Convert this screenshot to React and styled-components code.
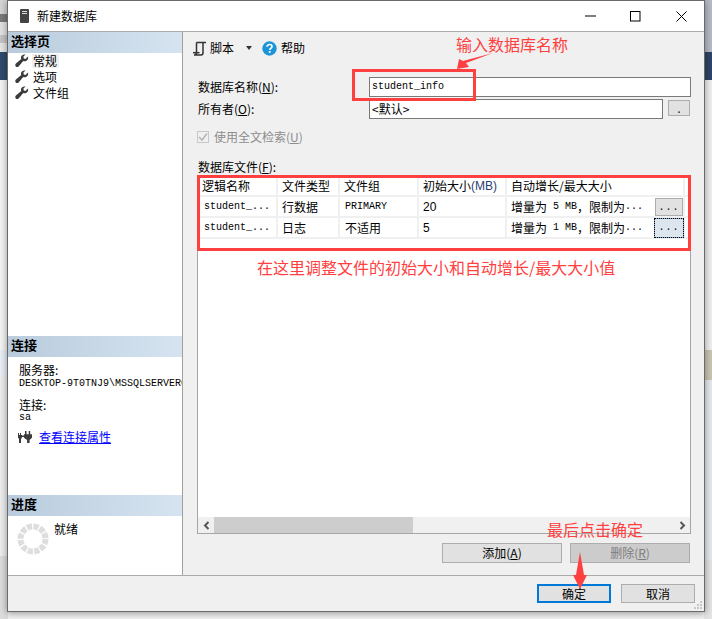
import React from "react";
import styled, { createGlobalStyle } from "styled-components";

const CJK = `"Noto Sans CJK SC", "Liberation Sans", sans-serif`;
const RED = "#ff4040";

const Global = createGlobalStyle`
  html, body { margin: 0; padding: 0; background: #f0f0f0; }
  * { box-sizing: border-box; }
`;

const Desktop = styled.div`
  position: relative;
  width: 712px;
  height: 619px;
  overflow: hidden;
  font-family: ${CJK};
  font-size: 12px;
  line-height: 14px;
  color: #000;
  display: flex;
  justify-content: space-between;
`;
const Strip = styled.div`
  width: 8px;
  display: flex;
  flex-direction: column;
`;
const Band = styled.div`
  height: ${(p) => p.$h}px;
  flex: ${(p) => (p.$h ? "none" : 1)};
  background: ${(p) => p.$c};
`;

const Window = styled.div`
  position: absolute;
  left: 7px;
  top: 0;
  width: 698px;
  height: 612px;
  border: 1px solid #6a6a6a;
  background: #f0f0f0;
  box-shadow: 0 1px 7px rgba(0, 0, 0, 0.4);
  display: flex;
  flex-direction: column;
`;
const TitleBar = styled.div`
  height: 31px;
  flex: none;
  background: #fff;
  border-bottom: 1px solid #ababab;
  display: flex;
  align-items: center;
  padding-left: 12px;
`;
const TitleText = styled.span`
  margin-left: 8px;
  flex: 1;
  margin-top: -1px;
`;
const WinBtn = styled.span`
  width: 45px;
  height: 30px;
  display: flex;
  align-items: center;
  justify-content: center;
  margin-right: ${(p) => p.$mr || 0}px;
`;
const Body = styled.div`
  flex: 1;
  display: flex;
  min-height: 0;
`;
const Sidebar = styled.aside`
  width: 175px;
  flex: none;
  background: #fff;
  border-right: 1px solid #a0a0a0;
  display: flex;
  flex-direction: column;
`;
const SectionHead = styled.div`
  height: 21px;
  flex: none;
  padding: 0 0 3px 3px;
  display: flex;
  align-items: center;
  font-size: 13px;
  font-weight: 700;
  background: linear-gradient(90deg, #b9cbdc 0%, #d6e4f1 100%);
`;
const Nav = styled.nav`
  height: 283px;
  flex: none;
  padding: 0 0 0 7px;
`;
const NavRow = styled.div`
  height: 16px;
  display: flex;
  align-items: center;
  gap: 3px;
`;
const NavLabel = styled.span`
  padding: 0 2px 0 1px;
  background: ${(p) => (p.$active ? "#f0f0f0" : "transparent")};
`;
const ConnBody = styled.div`
  height: 138px;
  flex: none;
  padding: 7px 0 0 11px;
  overflow: hidden;
`;
const ConnLine = styled.div`
  height: ${(p) => p.$h || 12}px;
  margin-top: ${(p) => p.$mt || 0}px;
  line-height: ${(p) => p.$h || 12}px;
  white-space: nowrap;
`;
const LinkRow = styled.div`
  display: flex;
  align-items: center;
  gap: 6px;
  margin-top: 8px;
  height: 16px;
  margin-left: -1px;
`;
const Link = styled.a`
  color: #0000ff;
  text-decoration: underline;
`;
const ProgressBody = styled.div`
  flex: 1;
  display: flex;
  padding: 7px 0 0 9px;
  gap: 5px;
`;
const Ready = styled.span`
  line-height: 12px;
`;

const Lat = styled.span`
  font-family: "Liberation Mono", monospace;
  font-size: 10px;
`;

const Main = styled.main`
  flex: 1;
  min-width: 0;
  display: flex;
  flex-direction: column;
  padding: 6px 13px 12px 14px;
`;
const Toolbar = styled.div`
  height: 20px;
  flex: none;
  margin-left: -5px;
  display: flex;
  align-items: center;
`;
const ToolLabel = styled.span`
  margin-left: ${(p) => p.$ml || 0}px;
`;
const Caret = styled.span`
  width: 0;
  height: 0;
  margin: 0 10px 0 12px;
  border-left: 3.5px solid transparent;
  border-right: 3.5px solid transparent;
  border-top: 4px solid #333;
`;
const Form = styled.div`
  margin-top: 19px;
  padding-left: 1px;
  display: grid;
  grid-template-columns: 171px 1fr;
  row-gap: 2px;
  align-items: center;
`;
const Input = styled.div`
  height: 20px;
  background: #fff;
  border: 1px solid #7a7a7a;
  padding-left: 2px;
  display: flex;
  align-items: center;
  flex: 1;
`;
const OwnerRow = styled.div`
  display: flex;
  gap: 5px;
  align-items: flex-start;
`;
const DotBtn = styled.div`
  width: 22px;
  height: 16px;
  margin: 1px 1px 0 0;
  background: #e1e1e1;
  border: 1px solid #adadad;
  display: flex;
  justify-content: center;
  font-size: 10px;
  line-height: 20px;
  overflow: hidden;
  font-family: "Liberation Mono", monospace;
`;
const CheckRow = styled.div`
  margin-top: 9px;
  height: 18px;
  display: flex;
  align-items: center;
  gap: 5px;
  color: #8c8c8c;
  flex: none;
`;
const CheckBox = styled.span`
  width: 12px;
  height: 12px;
  border: 1px solid #c8c8c8;
  background: #f0f0f0;
  display: flex;
`;
const FilesLabel = styled.div`
  margin-top: 14px;
  margin-left: 1px;
  height: 14px;
  flex: none;
`;
const GridBox = styled.div`
  margin-top: 2px;
  flex: 1;
  min-height: 0;
  background: #fff;
  border: 1px solid #a6a6a6;
  border-top: none;
  display: flex;
  flex-direction: column;
`;
const Rows = styled.div`
  flex: 1;
`;
const Row = styled.div`
  display: grid;
  grid-template-columns: 80px 62px 79px 88px 178px 1fr;
  height: ${(p) => p.$h}px;
  border-bottom: 2px solid #f0f0f0;
`;
const Cell = styled.div`
  border-right: 2px solid #f0f0f0;
  padding-left: ${(p) => p.$pl || 5}px;
  display: flex;
  align-items: center;
  white-space: nowrap;
  font-family: ${(p) => (p.$sans ? `"Liberation Sans", sans-serif` : CJK)};
`;
const SansMB = styled.span`
  font-family: "Liberation Sans", sans-serif;
  color: #2a3f6f;
  font-size: 12px;
`;
const GrowCell = styled(Cell)`
  position: relative;
  overflow: visible;
`;
const RowBtn = styled.div`
  position: absolute;
  right: ${(p) => (p.$focus ? -1 : 0)}px;
  top: ${(p) => (p.$focus ? 0 : 1)}px;
  width: ${(p) => (p.$focus ? 30 : 28)}px;
  height: ${(p) => (p.$focus ? 20 : 18)}px;
  background: ${(p) => (p.$focus ? "#dde6ee" : "#e1e1e1")};
  border: 1px solid ${(p) => (p.$focus ? "#7fa6c9" : "#adadad")};
  outline: ${(p) => (p.$focus ? "1px dotted #000" : "none")};
  outline-offset: -1px;
  text-align: center;
  font-family: "Liberation Mono", monospace;
  font-size: 10px;
  letter-spacing: 1px;
  line-height: 17px;
`;
const Scrollbar = styled.div`
  height: 16px;
  flex: none;
  background: #f0f0f0;
  display: flex;
  align-items: center;
`;
const ScrollArrow = styled.span`
  width: 16px;
  height: 16px;
  flex: none;
  display: flex;
  align-items: center;
  justify-content: center;
`;
const ScrollTrack = styled.div`
  flex: 1;
  height: 16px;
`;
const Thumb = styled.div`
  width: 199px;
  height: 16px;
  background: #cdcdcd;
`;
const GridActions = styled.div`
  margin-top: 9px;
  height: 20px;
  flex: none;
  display: flex;
  justify-content: flex-end;
  gap: 8px;
  padding-right: 1px;
`;
const Btn = styled.div`
  width: ${(p) => p.$w}px;
  height: ${(p) => p.$h || 20}px;
  background: ${(p) => (p.$disabled ? "#cccccc" : "#e1e1e1")};
  color: ${(p) => (p.$disabled ? "#7d7d7d" : "#000")};
  border: ${(p) => (p.$primary ? "2px solid #0078d7" : "1px solid #adadad")};
  display: flex;
  align-items: center;
  justify-content: center;
`;
const Footer = styled.footer`
  height: 36px;
  flex: none;
  border-top: 1px solid #ababab;
  display: flex;
  justify-content: flex-end;
  align-items: flex-start;
  padding: 8px 9px 0 0;
  gap: 10px;
  position: relative;
`;
const Grip = styled.svg`
  position: absolute;
  right: 1px;
  bottom: 1px;
`;

const Note = styled.div`
  position: absolute;
  left: ${(p) => p.$x}px;
  top: ${(p) => p.$y}px;
  color: ${RED};
  font-size: 16px;
  line-height: 20px;
  white-space: nowrap;
`;
const RedBox = styled.div`
  position: absolute;
  left: ${(p) => p.$x}px;
  top: ${(p) => p.$y}px;
  width: ${(p) => p.$w}px;
  height: ${(p) => p.$h}px;
  border: 3px solid ${RED};
`;
const Arrow = styled.svg`
  position: absolute;
  left: 0;
  top: 0;
  pointer-events: none;
`;

const Wrench = () => (
  <svg width="14" height="14" viewBox="0 0 14 14" style={{ flex: "none" }}>
    <path d="M13 2.6 10.4 5 8.8 4.4 8.4 2.6 10.6.6C8.6-.1 6.4 1 6 3c-.1.7 0 1.4.2 1.9L.9 9.6c-.9.9-.8 2.1-.1 2.9.8.8 2 .8 2.8-.1l4.7-5.3c.7.3 1.4.3 2.1.2 2-.5 3.2-2.6 2.6-4.7Z" fill="#3c3c3c" />
  </svg>
);
const ScriptIcon = () => (
  <svg width="15" height="15" viewBox="0 0 15 15" style={{ flex: "none" }}>
    <path d="M4.5 1.5h9.5M4.5 1.5v10.5M4.5 12c0 1.5-1 2-2.5 2h7c1.5 0 2-1 2-2.5V1.8" fill="none" stroke="#333" strokeWidth="1.5" />
    <path d="M1 11.7h6.5" stroke="#333" strokeWidth="1.5" />
  </svg>
);
const HelpIcon = () => (
  <svg width="15" height="15" viewBox="0 0 15 15" style={{ flex: "none" }}>
    <circle cx="7.5" cy="7.5" r="7.2" fill="#1b95d8" />
    <path d="M5.1 5.7c0-1.4 1.1-2.2 2.5-2.2s2.4.8 2.4 2c0 1.9-2.3 1.8-2.3 3.5" fill="none" stroke="#fff" strokeWidth="1.7" />
    <rect x="6.8" y="10" width="1.8" height="1.8" fill="#fff" />
  </svg>
);
const ServerIcon = () => (
  <svg width="9" height="14" viewBox="0 0 9 14" style={{ flex: "none" }}>
    <rect width="9" height="14" rx="1" fill="#444" />
    <rect x="2" y="2" width="5" height="1" fill="#ddd" />
    <rect x="2" y="4" width="5" height="1" fill="#ddd" />
  </svg>
);
const PlugIcon = () => (
  <svg width="15" height="12" viewBox="0 0 15 12" style={{ flex: "none" }}>
    <path d="M0 2h1v2h1V2h1v2h1v2.5L3 8v4H1V8L0 6.5Z" fill="#3c3c3c" />
    <path d="M7 0h1.5v3.2h2.2V0h1.5v3.2H14v3.5L11.6 9v3H9.1V9L6 6.7V3.2h1Z" fill="#3c3c3c" />
    <path d="M4 4.6h2v1.4H4z" fill="#3c3c3c" />
  </svg>
);
const Spinner = () => (
  <svg width="32" height="32" viewBox="0 0 32 32" style={{ flex: "none" }}>
    <circle cx="16" cy="16" r="12.5" fill="none" stroke="#dedede" strokeWidth="6" strokeDasharray="5.2 1.35" />
  </svg>
);

export default function App() {
  const left = [
    [14, "#d4d4d4"], [8, "#7a7a7a"], [13, "#e2e2e2"], [8, "#c4c4c4"], [9, "#e6e6e6"],
    [28, "#2f4a6e"], [270, "#f4f4f4"], [26, "#e8eef6"], [180, "#ececec"], [0, "#dcdcdc"],
  ];
  const right = [
    [52, "#b6bbc7"], [28, "#2c4466"], [270, "#eeeeee"], [30, "#c8c5b3"], [180, "#e6e8ef"], [0, "#e4e4e4"],
  ];
  return (
    <Desktop>
      <Global />
      <Strip>{left.map(([h, c], i) => <Band key={i} $h={h} $c={c} />)}</Strip>
      <Strip>{right.map(([h, c], i) => <Band key={i} $h={h} $c={c} />)}</Strip>

      <Window>
        <TitleBar>
          <ServerIcon />
          <TitleText>新建数据库</TitleText>
          <WinBtn>
            <svg width="11" height="2"><rect width="11" height="1" y="0.5" fill="#000" /></svg>
          </WinBtn>
          <WinBtn $mr={1}>
            <svg width="11" height="11"><rect x="0.5" y="0.5" width="9.5" height="9.5" fill="none" stroke="#000" /></svg>
          </WinBtn>
          <WinBtn>
            <svg width="11" height="11"><path d="M.5.5l10 10M10.5.5l-10 10" stroke="#000" fill="none" /></svg>
          </WinBtn>
        </TitleBar>
        <Body>
          <Sidebar>
            <SectionHead>选择页</SectionHead>
            <Nav>
              <NavRow><Wrench /><NavLabel $active>常规</NavLabel></NavRow>
              <NavRow><Wrench /><NavLabel>选项</NavLabel></NavRow>
              <NavRow><Wrench /><NavLabel>文件组</NavLabel></NavRow>
            </Nav>
            <SectionHead>连接</SectionHead>
            <ConnBody>
              <ConnLine $h={11}>服务器:</ConnLine>
              <ConnLine><Lat>DESKTOP-9T0TNJ9\MSSQLSERVER01</Lat></ConnLine>
              <ConnLine $mt={12}>连接:</ConnLine>
              <ConnLine $mt={-2}><Lat>sa</Lat></ConnLine>
              <LinkRow><PlugIcon /><Link>查看连接属性</Link></LinkRow>
            </ConnBody>
            <SectionHead>进度</SectionHead>
            <ProgressBody>
              <Spinner />
              <Ready>就绪</Ready>
            </ProgressBody>
          </Sidebar>
          <Main>
            <Toolbar>
              <ScriptIcon />
              <ToolLabel $ml={3}>脚本</ToolLabel>
              <Caret />
              <HelpIcon />
              <ToolLabel $ml={4}>帮助</ToolLabel>
            </Toolbar>
            <Form>
              <span>数据库名称(<u>N</u>):</span>
              <Input><Lat>student_info</Lat></Input>
              <span>所有者(<u>O</u>):</span>
              <OwnerRow>
                <Input>&lt;默认&gt;</Input>
                <DotBtn>.</DotBtn>
              </OwnerRow>
            </Form>
            <CheckRow>
              <CheckBox>
                <svg width="10" height="10" viewBox="0 0 10 10"><path d="M1 5l3 3 5-6.5" fill="none" stroke="#b5b5b5" strokeWidth="1.6" /></svg>
              </CheckBox>
              <span>使用全文检索(<u>U</u>)</span>
            </CheckRow>
            <FilesLabel>数据库文件(<u>F</u>):</FilesLabel>
            <GridBox>
              <Rows>
                <Row $h={21}>
                  <Cell $pl={4}>逻辑名称</Cell>
                  <Cell $pl={4}>文件类型</Cell>
                  <Cell $pl={4}>文件组</Cell>
                  <Cell $pl={4}>初始大小<SansMB>(MB)</SansMB></Cell>
                  <Cell $pl={4}>自动增长/最大大小</Cell>
                  <Cell />
                </Row>
                <Row $h={21}>
                  <Cell $pl={6}><Lat>student_...</Lat></Cell>
                  <Cell $pl={4}>行数据</Cell>
                  <Cell><Lat>PRIMARY</Lat></Cell>
                  <Cell $pl={4} $sans>20</Cell>
                  <GrowCell $pl={4}>增量为 <Lat>&nbsp;5 MB</Lat>，限制为<Lat>...</Lat><RowBtn>...</RowBtn></GrowCell>
                  <Cell />
                </Row>
                <Row $h={21}>
                  <Cell $pl={6}><Lat>student_...</Lat></Cell>
                  <Cell $pl={4}>日志</Cell>
                  <Cell>不适用</Cell>
                  <Cell $pl={4} $sans>5</Cell>
                  <GrowCell $pl={4}>增量为 <Lat>&nbsp;1 MB</Lat>，限制为<Lat>...</Lat><RowBtn $focus>...</RowBtn></GrowCell>
                  <Cell />
                </Row>
              </Rows>
              <Scrollbar>
                <ScrollArrow>
                  <svg width="7" height="9"><path d="M5.5 1 2 4.5 5.5 8" fill="none" stroke="#555" strokeWidth="2" /></svg>
                </ScrollArrow>
                <ScrollTrack><Thumb /></ScrollTrack>
                <ScrollArrow>
                  <svg width="7" height="9"><path d="M1.5 1 5 4.5 1.5 8" fill="none" stroke="#555" strokeWidth="2" /></svg>
                </ScrollArrow>
              </Scrollbar>
            </GridBox>
            <GridActions>
              <Btn $w={120}>添加(<u>A</u>)</Btn>
              <Btn $w={120} $disabled>删除(<u>R</u>)</Btn>
            </GridActions>
          </Main>
        </Body>
        <Footer>
          <Btn $w={74} $h={19} $primary>确定</Btn>
          <Btn $w={74} $h={19}>取消</Btn>
          <Grip width="9" height="9" viewBox="0 0 9 9">
            <path d="M6 0h2v2H6zM3 3h2v2H3zM6 3h2v2H6zM0 6h2v2H0zM3 6h2v2H3zM6 6h2v2H6z" fill="#c8c8c8" />
          </Grip>
        </Footer>
      </Window>

      <RedBox $x={352} $y={69} $w={124} $h={32} />
      <RedBox $x={197} $y={175} $w={494} $h={76} />
      <Note $x={456} $y={34}>输入数据库名称</Note>
      <Note $x={257} $y={257}>在这里调整文件的初始大小和自动增长/最大大小值</Note>
      <Note $x={547} $y={519}>最后点击确定</Note>
      <Arrow width="712" height="619" viewBox="0 0 712 619">
        <path d="M493 53 466 63 469 67 457 69 459 59 463 61Z" fill={RED} />
        <path d="M580 552 584 575 587 575 580 589 573 575 576 575Z" fill={RED} />
      </Arrow>
    </Desktop>
  );
}
